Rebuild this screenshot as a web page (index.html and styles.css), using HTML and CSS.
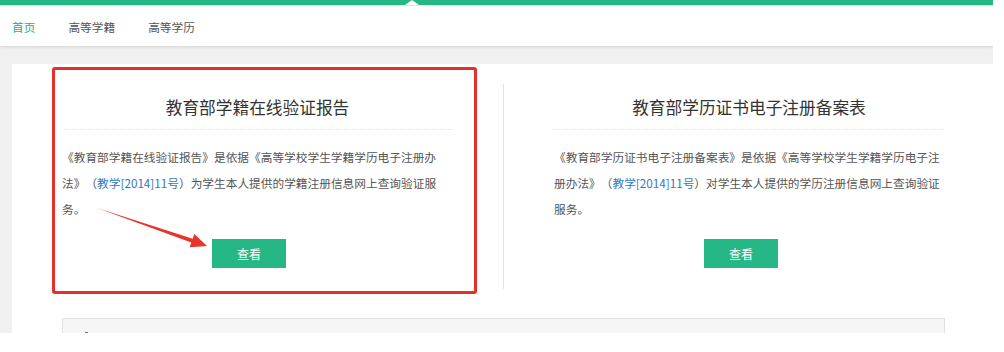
FILE: index.html
```html
<!DOCTYPE html>
<html lang="zh-CN">
<head>
    <meta charset="UTF-8">
    <title>学信档案 - 首页</title>
    <link rel="stylesheet" href="styles.css">
</head>
<body>
    <div class="page">
        <header class="topnav">
            <div class="topbar"></div>
            <ul class="menu">
                <li class="active"><a href="#">首页</a></li>
                <li><a href="#">高等学籍</a></li>
                <li><a href="#">高等学历</a></li>
            </ul>
        </header>

        <div class="panel">
            <div class="reports">
                <div class="report">
                    <h2>教育部学籍在线验证报告</h2>
                    <p>《教育部学籍在线验证报告》是依据《高等学校学生学籍学历电子注册办法》（<a href="#">教学[2014]11号</a>）为学生本人提供的学籍注册信息网上查询验证服务。</p>
                    <a class="btn" href="#">查看</a>
                </div>
                <div class="report">
                    <h2>教育部学历证书电子注册备案表</h2>
                    <p>《教育部学历证书电子注册备案表》是依据《高等学校学生学籍学历电子注册办法》（<a href="#">教学[2014]11号</a>）对学生本人提供的学历注册信息网上查询验证服务。</p>
                    <a class="btn" href="#">查看</a>
                </div>
            </div>
            <div class="notice">
                <span class="notice-icon"></span>
            </div>
        </div>

        <!-- annotation -->
        <div class="mark-box"></div>
        <svg class="mark-arrow" width="125" height="55" viewBox="0 0 125 55">
            <polygon points="7,8 102.7,38.8 104.3,34.1 117,46 99.7,47.3 101.3,42.6" fill="#e8342a"/>
        </svg>
    </div>
</body>
</html>
```

FILE: styles.css
```css
body {
    margin: 0;
    background: #fff;
    font-family: "Noto Sans CJK SC", "Liberation Sans", sans-serif;
    color: #555;
}

.page {
    position: relative;
    width: 993px;
    height: 333px;
    overflow: hidden;
    background: #f0f0f0;
}

/* top navigation */
.topnav {
    background: #fff;
    box-shadow: 0 1px 3px rgba(0, 0, 0, 0.12);
}

.topbar {
    position: relative;
    height: 5px;
    background: #25b586;
    border-bottom: 1px solid #c8eedf;
}

.topbar::after {
    content: "";
    position: absolute;
    left: 405px;
    bottom: 0;
    border-left: 7px solid transparent;
    border-right: 7px solid transparent;
    border-bottom: 5px solid #fff;
}

.menu {
    list-style: none;
    margin: 0;
    padding: 0 0 0 12px;
    height: 40px;
    display: flex;
    gap: 33px;
}

.menu a {
    display: block;
    line-height: 42px;
    font-size: 11.7px;
    color: #555;
    text-decoration: none;
}

.menu .active a {
    color: #27ae82;
}

/* content panel */
.panel {
    margin: 18px 0 0 12px;
    width: 982px;
    padding-top: 20px;
    background: #fff;
}

.reports {
    display: grid;
    grid-template-columns: 491px 491px;
}

.report {
    padding: 0 50px 21px;
}

.report + .report {
    border-left: 1px solid #e4e4e4;
}

.report h2 {
    margin: 0;
    padding: 11px 0 10px;
    font-size: 16.7px;
    line-height: 24px;
    font-weight: normal;
    color: #333;
    text-align: center;
    border-bottom: 1px dotted #d6e6e0;
}

.report p {
    margin: 14px 0 0;
    font-size: 11.7px;
    line-height: 26px;
    text-spacing-trim: space-all;
}

.report p a {
    color: #2f79c0;
    text-decoration: none;
}

.btn {
    display: block;
    width: 74px;
    height: 29px;
    margin: 17px 0 0 150px;
    background: #25b786;
    color: #fff;
    font-size: 12px;
    line-height: 29px;
    text-align: center;
    text-decoration: none;
}

.notice {
    margin: 29px 49px 0 50px;
    height: 60px;
    background: #f6f6f6;
    border: 1px solid #e2e2e2;
    padding: 13px 22px;
    box-sizing: border-box;
}

.notice-icon {
    display: block;
    width: 3px;
    height: 8px;
    background: #777;
}

/* red annotation */
.mark-box {
    position: absolute;
    left: 52px;
    top: 67px;
    width: 425px;
    height: 227px;
    box-sizing: border-box;
    border: 3px solid #e5302a;
    border-radius: 3px;
}

.mark-arrow {
    position: absolute;
    left: 90px;
    top: 200px;
}
```
